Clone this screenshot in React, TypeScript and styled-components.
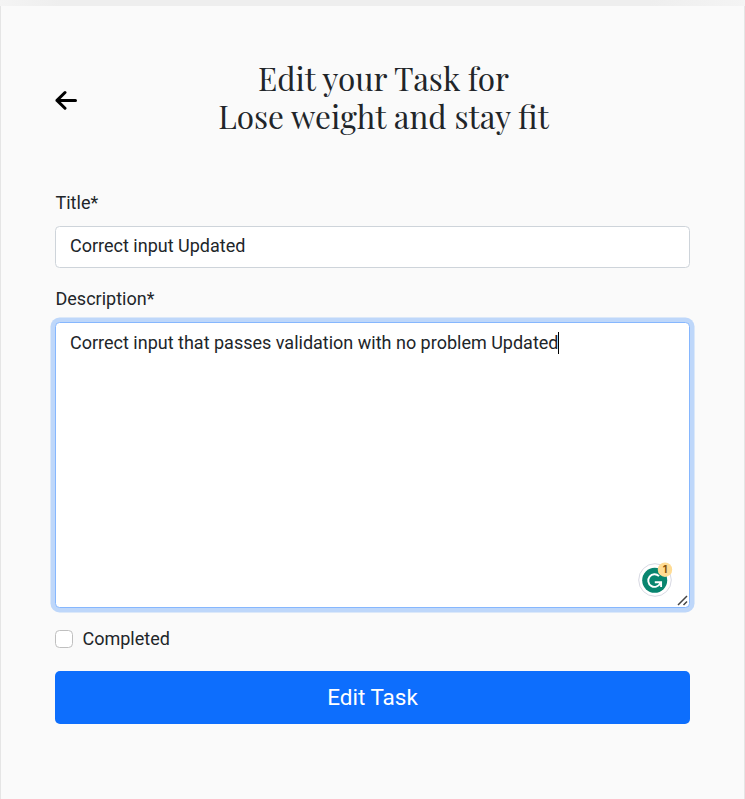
import React from "react";
import styled, { createGlobalStyle } from "styled-components";

const GlobalStyle = createGlobalStyle`
  * { box-sizing: border-box; }
  body {
    margin: 0;
    background: #efefef;
    color: #212529;
    font: 400 18px/27px Roboto, sans-serif;
    overflow: hidden;
  }
`;

const Page = styled.div`
  height: 799px;
  padding: 6px 1px 0;
  background: linear-gradient(90deg, #f4f4f4, #eeeeee 60px, #eeeeee 650px, #f4f4f4);
`;

const Card = styled.main`
  height: 793px;
  padding: 54px 54px 0;
  background: #fafafa;
  box-shadow: 0 0 0 1px #e5e5e5;
  clip-path: inset(0 -1px 0 -1px);
`;

const Header = styled.header`
  display: flex;
  align-items: center;
  height: 78px;
`;

const BackButton = styled.button`
  display: flex;
  width: 22px;
  height: 22px;
  padding: 0;
  border: 0;
  background: none;
`;

const Heading = styled.h1`
  flex: 1;
  margin: 0 0 4px;
  font: 400 31.5px/38px "Playfair Display", "Liberation Serif", serif;
  text-align: center;
`;

const Form = styled.form`
  display: flex;
  flex-direction: column;
  margin-top: 51px;
`;

const Label = styled.label`
  height: 27px;
  margin-bottom: 10px;
  padding-left: 0.5px;
`;

const TextInput = styled.input`
  width: 100%;
  height: 42px;
  margin-bottom: 17px;
  padding: 4px 14px 7px;
  border: 1px solid #ced4da;
  border-radius: 4.5px;
  background: #fff;
  color: #212529;
  font: inherit;
`;

const DescriptionBox = styled.div`
  position: relative;
  height: 286px;
  padding: 6px 14px;
  border: 1px solid #86b7fe;
  border-radius: 4.5px;
  background: #fff;
  box-shadow: 0 0 0 4.5px rgba(13, 110, 253, 0.25);
  outline: none;
`;

const Caret = styled.span`
  display: inline-block;
  width: 1px;
  height: 22px;
  margin-left: -1px;
  vertical-align: -5px;
  background: #000;
`;

const AssistantBadge = styled.svg`
  position: absolute;
  right: 16px;
  bottom: 10.5px;
`;

const ResizeGrip = styled.svg`
  position: absolute;
  right: 0;
  bottom: 0;
`;

const CheckRow = styled.label`
  display: flex;
  align-items: center;
  gap: 9.5px;
  height: 27px;
  margin-top: 17px;
`;

const Checkbox = styled.input`
  appearance: none;
  width: 18px;
  height: 18px;
  margin: 0;
  border: 1px solid #bfbfbf;
  border-radius: 4.5px;
  background: #fff;
`;

const SubmitButton = styled.button`
  height: 53px;
  margin-top: 19px;
  padding: 0 0 2px;
  border: 0;
  border-radius: 5px;
  background: #0d6efd;
  color: #fff;
  font: 400 22.5px/34px Roboto, sans-serif;
`;

export default function App() {
  return (
    <>
      <GlobalStyle />
      <Page>
        <Card>
          <Header>
            <BackButton aria-label="Back">
              <svg width="22" height="22" viewBox="0 0 22 22" fill="none" stroke="#000" strokeWidth="3" strokeLinecap="round" strokeLinejoin="round">
                <path d="M20.5 12.4H2M10 4.5L2 12.4L10 20.2" />
              </svg>
            </BackButton>
            <Heading>
              Edit your Task for<br />
              Lose weight and stay fit
            </Heading>
          </Header>
          <Form>
            <Label htmlFor="title">Title*</Label>
            <TextInput id="title" defaultValue="Correct input Updated" />
            <Label>Description*</Label>
            <DescriptionBox role="textbox" aria-multiline="true">
              Correct input that passes validation with no problem Updated<Caret />
              <AssistantBadge width="36" height="36" viewBox="0 0 36 36">
                <circle cx="18" cy="19" r="16.3" fill="#fff" stroke="#d8d9e3" />
                <circle cx="17.7" cy="19.3" r="12.5" fill="#08856f" />
                <path d="M22 15.1A6.3 6.3 0 1 0 23.2 22.4M17.8 21.3H24.1V26" fill="none" stroke="#fff" strokeWidth="1.9" />
                <circle cx="28" cy="8.7" r="7.2" fill="#ffdc94" />
                <text x="28" y="12.4" textAnchor="middle" fontFamily="Inter, sans-serif" fontSize="10.5" fontWeight="700" fill="#87530b">1</text>
              </AssistantBadge>
              <ResizeGrip width="12" height="12" viewBox="0 0 12 12" stroke="#444" strokeWidth="1.5">
                <path d="M1 10L10 1M6.5 10L10 6.5" />
              </ResizeGrip>
            </DescriptionBox>
            <CheckRow><Checkbox type="checkbox" />Completed</CheckRow>
            <SubmitButton type="button">Edit Task</SubmitButton>
          </Form>
        </Card>
      </Page>
    </>
  );
}
